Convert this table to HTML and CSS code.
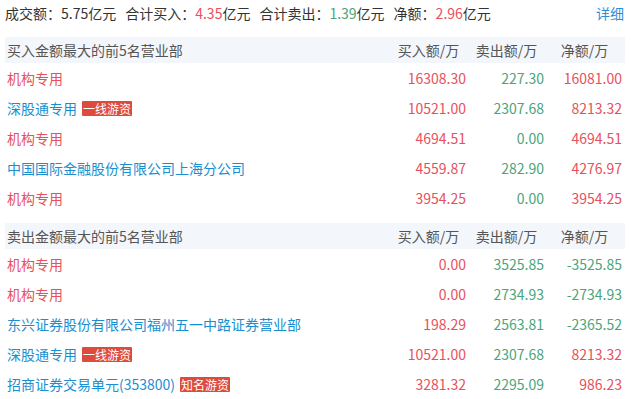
FILE: index.html
```html
<!DOCTYPE html>
<html lang="zh-CN">
<head>
<meta charset="utf-8">
<link rel="stylesheet" href="styles.css">
</head>
<body>
<div class="summary">
  <div class="stats">
    <span class="stat">成交额：5.75亿元</span>
    <span class="stat">合计买入：<em class="up">4.35</em>亿元</span>
    <span class="stat">合计卖出：<em class="down">1.39</em>亿元</span>
    <span class="stat">净额：<em class="up">2.96</em>亿元</span>
  </div>
  <a class="more">详细</a>
</div>

<div class="block first">
  <div class="row head">
    <div class="name">买入金额最大的前5名营业部</div>
    <div class="num">买入额/万</div>
    <div class="num">卖出额/万</div>
    <div class="num">净额/万</div>
  </div>
  <div class="row">
    <div class="name inst">机构专用</div>
    <div class="num up">16308.30</div>
    <div class="num down">227.30</div>
    <div class="num up">16081.00</div>
  </div>
  <div class="row">
    <div class="name">深股通专用<span class="tag">一线游资</span></div>
    <div class="num up">10521.00</div>
    <div class="num down">2307.68</div>
    <div class="num up">8213.32</div>
  </div>
  <div class="row">
    <div class="name inst">机构专用</div>
    <div class="num up">4694.51</div>
    <div class="num down">0.00</div>
    <div class="num up">4694.51</div>
  </div>
  <div class="row">
    <div class="name">中国国际金融股份有限公司上海分公司</div>
    <div class="num up">4559.87</div>
    <div class="num down">282.90</div>
    <div class="num up">4276.97</div>
  </div>
  <div class="row">
    <div class="name inst">机构专用</div>
    <div class="num up">3954.25</div>
    <div class="num down">0.00</div>
    <div class="num up">3954.25</div>
  </div>
</div>

<div class="block second">
  <div class="row head">
    <div class="name">卖出金额最大的前5名营业部</div>
    <div class="num">买入额/万</div>
    <div class="num">卖出额/万</div>
    <div class="num">净额/万</div>
  </div>
  <div class="row">
    <div class="name inst">机构专用</div>
    <div class="num up">0.00</div>
    <div class="num down">3525.85</div>
    <div class="num down">-3525.85</div>
  </div>
  <div class="row">
    <div class="name inst">机构专用</div>
    <div class="num up">0.00</div>
    <div class="num down">2734.93</div>
    <div class="num down">-2734.93</div>
  </div>
  <div class="row">
    <div class="name">东兴证券股份有限公司福州五一中路证券营业部</div>
    <div class="num up">198.29</div>
    <div class="num down">2563.81</div>
    <div class="num down">-2365.52</div>
  </div>
  <div class="row">
    <div class="name">深股通专用<span class="tag">一线游资</span></div>
    <div class="num up">10521.00</div>
    <div class="num down">2307.68</div>
    <div class="num up">8213.32</div>
  </div>
  <div class="row">
    <div class="name">招商证券交易单元(353800)<span class="tag">知名游资</span></div>
    <div class="num up">3281.32</div>
    <div class="num down">2295.09</div>
    <div class="num up">986.23</div>
  </div>
</div>
</body>
</html>
```

FILE: styles.css
```css
html, body {
  margin: 0;
  padding: 0;
  background: #ffffff;
}
body {
  font-family: "Microsoft YaHei", "Noto Sans CJK SC", "Noto Sans", sans-serif;
  font-size: 14px;
  color: #333333;
  padding: 0 6px 0 5px;
}
em {
  font-style: normal;
}
.up {
  color: #e8505b;
}
.down {
  color: #4aa57b;
}
.summary {
  display: flex;
  justify-content: space-between;
  align-items: center;
  height: 26px;
}
.stats {
  display: flex;
  gap: 9px;
}
.more {
  color: #2e8fd6;
  margin-right: 1px;
  cursor: pointer;
}
.block.first {
  margin-top: 11px;
}
.block.second {
  margin-top: 10px;
}
.row {
  display: grid;
  grid-template-columns: 1fr 78px 78px 78px;
  height: 30px;
  align-items: center;
}
.row.head {
  height: 26px;
  background: #f3f6fa;
  color: #555555;
}
.row.head .num {
  text-align: center;
  color: #555555;
}
.name {
  padding-left: 2px;
  color: #1a8fcf;
  display: flex;
  align-items: center;
  white-space: nowrap;
}
.row.head .name {
  color: #555555;
}
.name.inst {
  color: #e8505b;
}
.num {
  text-align: right;
  padding-right: 3px;
  white-space: nowrap;
}
.tag {
  display: inline-block;
  margin-left: 5px;
  background: #dc4b3b;
  color: #ffffff;
  font-size: 12px;
  line-height: 15px;
  height: 15px;
  padding: 0 1px;
  border-radius: 1px;
}
```
